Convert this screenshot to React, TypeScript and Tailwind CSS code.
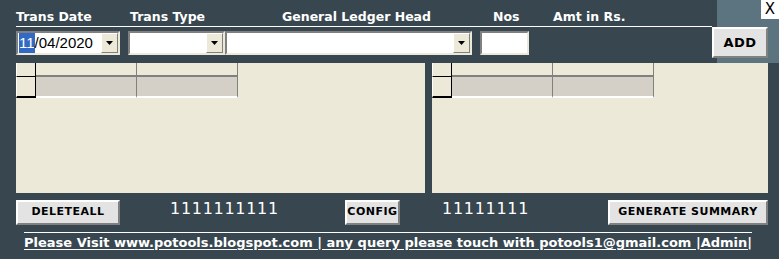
import React from "react";

const font = { fontFamily: '"DejaVu Sans", Verdana, sans-serif' };
const inputFont = { fontFamily: '"Liberation Sans", Arial, sans-serif' };

const Caret = () => (
  <svg width="7" height="4" viewBox="0 0 7 4">
    <path d="M0 0h7L3.5 4z" fill="#000" />
  </svg>
);

const Combo = ({ w, children }: { w: string; children?: React.ReactNode }) => (
  <div className={`${w} h-[24px] bg-white border-2 border-t-[#808080] border-l-[#808080] border-b-[#ece9d8] border-r-[#ece9d8] flex items-center`}>
    <div className="flex-1 h-full flex items-center pl-[1px] text-[15px] text-black overflow-hidden whitespace-nowrap" style={inputFont}>
      {children}
    </div>
    <div className="w-[17px] h-[20px] bg-[#ece9d8] border border-t-white border-l-white border-b-[#808080] border-r-[#808080] flex items-center justify-center">
      <Caret />
    </div>
  </div>
);

const Btn = ({ w, label }: { w: string; label: string }) => (
  <button className={`${w} h-[25px] bg-[#e3e3e3] border-2 border-t-white border-l-white border-b-[#808080] border-r-[#808080] text-[11px] font-bold text-black tracking-[0.5px]`}>
    {label}
  </button>
);

const Grid = () => (
  <div className="grid grid-cols-[20px_101px_101px] grid-rows-[14px_21px] w-fit">
    <div className="bg-[#ece9d8] border-l border-l-white border-r border-r-black border-b border-b-black" />
    <div className="bg-[#ece9d8] border-r border-b-2 border-[#808080]" />
    <div className="bg-[#ece9d8] border-r border-b-2 border-[#808080]" />
    <div className="bg-[#ece9d8] border-l border-l-white border-r border-r-black border-b-2 border-b-black" />
    <div className="bg-[#d4d0c8] border-r border-b-2 border-r-[#808080] border-b-white" />
    <div className="bg-[#d4d0c8] border-r border-b-2 border-r-[#808080] border-b-white" />
  </div>
);

export default function App() {
  return (
    <div className="relative w-[779px] h-[259px] overflow-hidden bg-[#38474f] text-white" style={font}>
      {/* lighter strip top right */}
      <div className="absolute right-0 top-0 w-[62px] h-[63px] bg-[#5b7480]" />
      <button className="absolute right-0 top-0 w-[18px] h-[19px] bg-white text-black text-[15px] leading-[19px] text-center">X</button>

      <div className="relative flex flex-col pl-[16px] pt-[8px]">
        {/* header labels */}
        <div className="flex h-[19px] w-[696px] items-end pb-[3px] border-b border-white text-[12.5px] font-bold leading-none">
          <span className="w-[114px]">Trans Date</span>
          <span className="w-[152px]">Trans Type</span>
          <span className="w-[211px]">General Ledger Head</span>
          <span className="w-[60px]">Nos</span>
          <span>Amt in Rs.</span>
        </div>

        {/* inputs row */}
        <div className="flex items-start mt-[4px] h-[31px]">
          <Combo w="w-[104px]">
            <span className="bg-[#316ac5] text-white">11</span>
            <span>/04/2020</span>
          </Combo>
          <div className="w-[8px]" />
          <Combo w="w-[97px]" />
          <Combo w="w-[247px]" />
          <div className="w-[8px]" />
          <div className="w-[49px] h-[24px] bg-white border-2 border-t-[#808080] border-l-[#808080] border-b-[#ece9d8] border-r-[#ece9d8]" />
          <div className="flex-1" />
          <div className="mr-[11px] -mt-[4px]">
            <Btn w="w-[56px] h-[31px] text-[13px]" label="ADD" />
          </div>
        </div>

        {/* panels */}
        <div className="flex gap-[7px] mt-[1px]">
          <div className="w-[409px] h-[130px] bg-[#ece9d8]">
            <Grid />
          </div>
          <div className="w-[336px] h-[130px] bg-[#ece9d8]">
            <Grid />
          </div>
        </div>

        {/* bottom buttons */}
        <div className="flex items-center mt-[7px] h-[24px]">
          <Btn w="w-[104px] h-[24px]" label="DELETEALL" />
          <span className="ml-[50px] w-[175px] text-[16px] tracking-[0.7px] -mt-[6px]">1111111111</span>
          <Btn w="w-[55px] h-[24px]" label="CONFIG" />
          <span className="ml-[42px] w-[166px] text-[16px] tracking-[0.7px] -mt-[6px]">11111111</span>
          <Btn w="w-[160px] h-[24px]" label="GENERATE SUMMARY" />
        </div>

        {/* footer */}
        <div className="ml-[8px] mt-[8px] w-[728px] border-t border-white pt-[1px] leading-[15px]">
          <span className="text-[13px] font-bold underline underline-offset-2 whitespace-nowrap">
            Please Visit www.potools.blogspot.com | any query please touch with potools1@gmail.com |Admin|
          </span>
        </div>
      </div>
    </div>
  );
}
